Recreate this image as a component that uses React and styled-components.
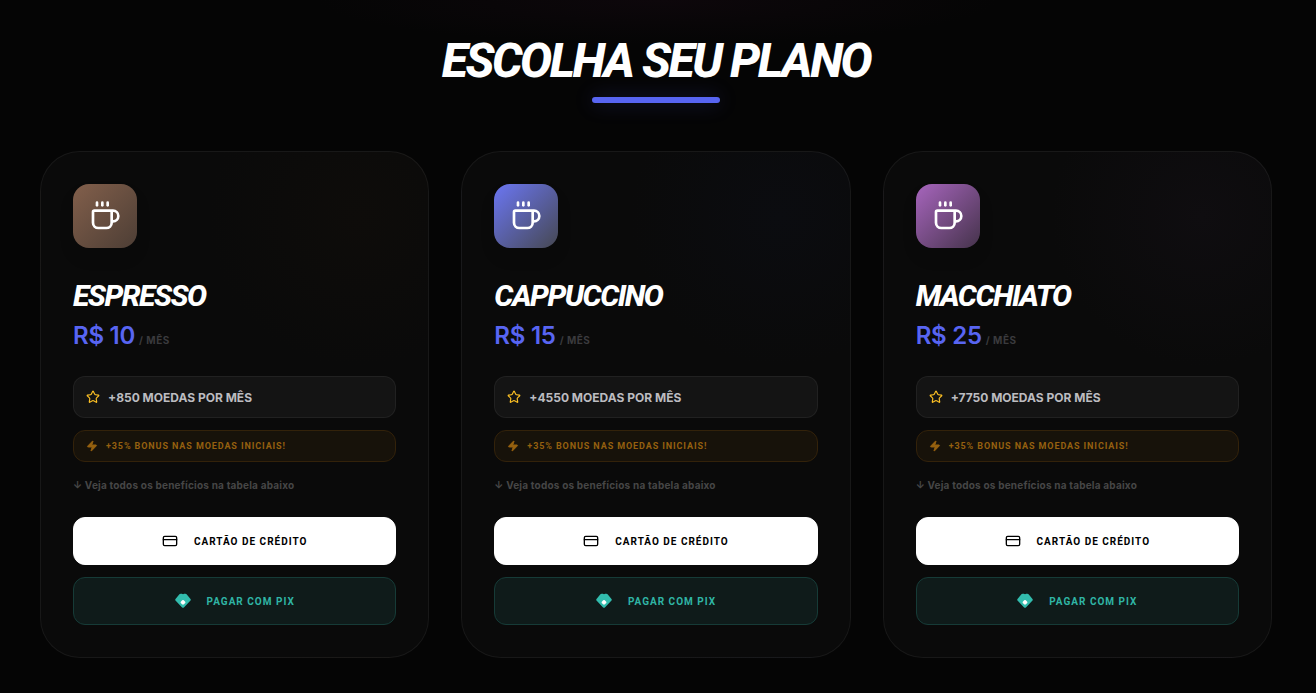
import React from 'react';
import styled, { createGlobalStyle } from 'styled-components';
import { Coffee, CreditCard, Star, Zap } from 'lucide-react';

const GlobalStyle = createGlobalStyle`
  * {
    box-sizing: border-box;
  }

  body {
    margin: 0;
    background: #050505;
    color: #ffffff;
    font-family: 'Inter', 'Liberation Sans', sans-serif;
  }
`;

const PageContainer = styled.main`
  padding: 36px 44px 32px 40px;
  background: radial-gradient(ellipse 340px 44px at 50% 0, #0d070b, #050505);
`;

const Header = styled.header`
  display: flex;
  flex-direction: column;
  align-items: center;
  gap: 12px;
  margin-bottom: 48px;

  h2 {
    margin: 0;
    font-family: 'Roboto', 'Liberation Sans', sans-serif;
    font-size: 48px;
    line-height: 49px;
    font-weight: 800;
    font-style: italic;
    letter-spacing: -0.05em;
    text-transform: uppercase;
  }
`;

const Underline = styled.div`
  width: 128px;
  height: 6px;
  border-radius: 3px;
  background: #5865f2;
  box-shadow: 0 0 20px rgba(88, 101, 242, 0.3);
`;

const PlansGrid = styled.section`
  display: grid;
  grid-template-columns: repeat(3, 1fr);
  gap: 32px;
`;

const Card = styled.article`
  display: flex;
  flex-direction: column;
  padding: 32px;
  border: 1px solid rgba(255, 255, 255, 0.06);
  border-radius: 40px;
  background: radial-gradient(circle 150px at 82% 64px, ${({ $glow }) => $glow}, #0a0a0a);
`;

const IconBox = styled.div`
  display: flex;
  align-items: center;
  justify-content: center;
  width: 64px;
  height: 64px;
  margin-bottom: 32px;
  border-radius: 16px;
  background: linear-gradient(135deg, ${({ $from }) => $from}, ${({ $to }) => $to});
  box-shadow: 0 10px 15px rgba(0, 0, 0, 0.1);
`;

const PlanName = styled.h3`
  margin: 0 0 8px;
  font-family: 'Roboto', 'Liberation Sans', sans-serif;
  font-size: 30px;
  line-height: 32px;
  font-weight: 800;
  font-style: italic;
  letter-spacing: -0.05em;
  text-transform: uppercase;
`;

const Price = styled.p`
  display: flex;
  align-items: baseline;
  gap: 4px;
  margin: 0 0 20px;
  line-height: 32px;

  strong {
    font-size: 24px;
    font-weight: 600;
    letter-spacing: -0.01em;
    color: #5865f2;
  }

  span {
    font-size: 10px;
    font-weight: 700;
    letter-spacing: 0.05em;
    color: #3b3b3e;
    text-transform: uppercase;
  }
`;

const Coins = styled.div`
  display: flex;
  align-items: center;
  gap: 8px;
  height: 42px;
  margin-bottom: 12px;
  padding: 0 12px;
  border: 1px solid rgba(255, 255, 255, 0.06);
  border-radius: 12px;
  background: #141414;
  color: #bcbcc0;
  font-size: 12px;
  font-weight: 700;
  text-transform: uppercase;

  svg {
    color: #fbbf24;
  }
`;

const Bonus = styled.div`
  display: flex;
  align-items: center;
  gap: 8px;
  height: 32px;
  margin-bottom: 16px;
  padding: 0 12px;
  border: 1px solid #33220a;
  border-radius: 12px;
  background: #17120a;
  color: #95600f;
  font-family: 'Roboto', 'Liberation Sans', sans-serif;
  font-size: 9px;
  line-height: 12px;
  font-weight: 700;
  letter-spacing: 0.1em;
  text-transform: uppercase;
`;

const Hint = styled.p`
  margin: 0 0 24px;
  font-size: 10px;
  line-height: 15px;
  font-weight: 700;
  letter-spacing: 0.02em;
  color: #464646;
`;

const Actions = styled.div`
  display: flex;
  flex-direction: column;
  gap: 12px;
`;

const PayButton = styled.button`
  display: flex;
  align-items: center;
  justify-content: center;
  gap: 16px;
  height: 48px;
  border: 1px solid ${({ $pix }) => ($pix ? '#163b37' : '#ffffff')};
  border-radius: 12px;
  background: ${({ $pix }) => ($pix ? '#0f1b1a' : '#ffffff')};
  color: ${({ $pix }) => ($pix ? '#2fb5a5' : '#000000')};
  font-family: 'Roboto', 'Liberation Sans', sans-serif;
  font-size: 10px;
  font-weight: 700;
  letter-spacing: 0.1em;
  text-transform: uppercase;
  cursor: pointer;
`;

const PixIcon = () => (
  <svg width="16" height="16" viewBox="0 0 16 16" aria-hidden="true">
    <path d="M5.6.7h1.2L8 1.2 9.2.7h1.2q.7 0 1.2.5l3.9 4.9q.6.8 0 1.5l-6.6 6.8q-.9.8-1.8 0L.5 7.6q-.6-.7 0-1.5l3.9-4.9q.5-.5 1.2-.5z" fill="#32bcad" />
    <path d="M8 6.9q.5 0 .8.4l1.4 1.5q.5.6 0 1.2l-1.3 1.3q-.9.7-1.8 0L5.800 10q-.5-.6 0-1.200l1.4-1.500q.3-.4.8-.4z" fill="#ffffff" />
  </svg>
);

const plans = [
  { name: 'Espresso', price: 10, coins: 850, from: '#825f4b', to: '#4d3e35', glow: '#0e0c0a' },
  { name: 'Cappuccino', price: 15, coins: 4550, from: '#6b76f3', to: '#464852', glow: '#0b0c10' },
  { name: 'Macchiato', price: 25, coins: 7750, from: '#a765bd', to: '#45334b', glow: '#0f0d10' },
];

const PlanCard = ({ plan }) => (
  <Card $glow={plan.glow}>
    <IconBox $from={plan.from} $to={plan.to}>
      <Coffee size={32} />
    </IconBox>
    <PlanName>{plan.name}</PlanName>
    <Price>
      <strong>R$ {plan.price}</strong>
      <span>/ mês</span>
    </Price>
    <Coins>
      <Star size={14} />
      <span>+{plan.coins} moedas por mês</span>
    </Coins>
    <Bonus>
      <Zap size={12} fill="currentColor" />
      <span>+35% bonus nas moedas iniciais!</span>
    </Bonus>
    <Hint>↓ Veja todos os benefícios na tabela abaixo</Hint>
    <Actions>
      <PayButton type="button">
        <CreditCard size={16} />
        Cartão de crédito
      </PayButton>
      <PayButton type="button" $pix>
        <PixIcon />
        Pagar com Pix
      </PayButton>
    </Actions>
  </Card>
);

const App = () => (
  <>
    <GlobalStyle />
    <PageContainer>
      <Header>
        <h2>Escolha seu plano</h2>
        <Underline />
      </Header>
      <PlansGrid>
        {plans.map((plan) => (
          <PlanCard key={plan.name} plan={plan} />
        ))}
      </PlansGrid>
    </PageContainer>
  </>
);

export default App;
